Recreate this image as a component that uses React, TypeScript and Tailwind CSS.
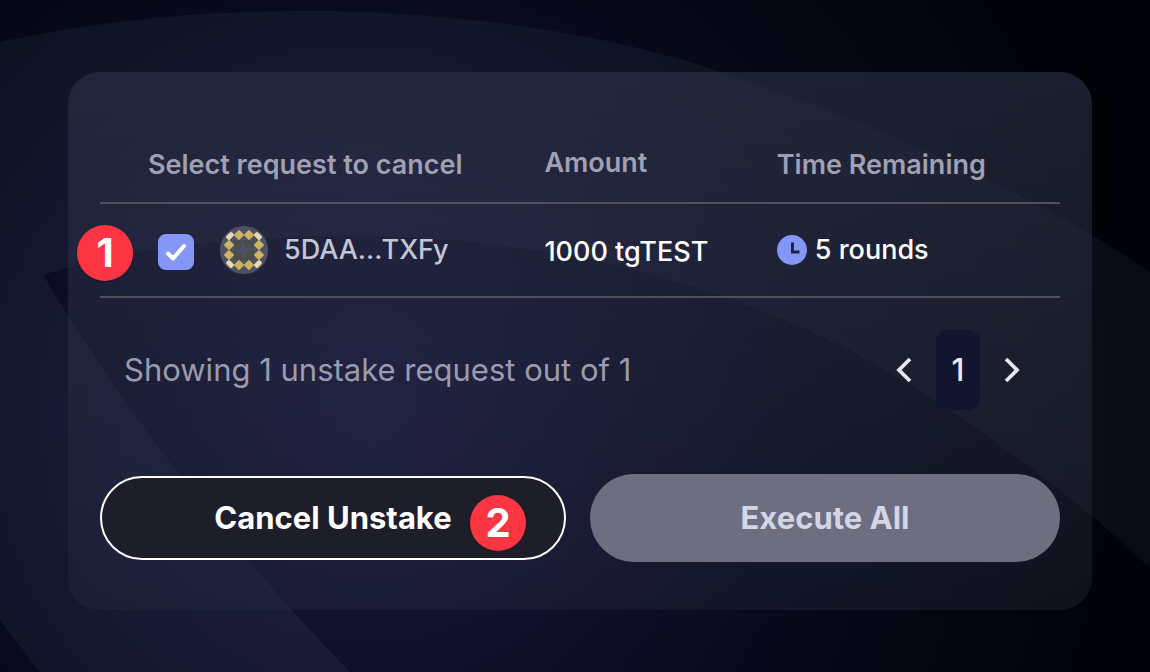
import { useState } from "react";

function Backdrop() {
  return (
    <svg
      aria-hidden="true"
      className="absolute inset-0 h-full w-full"
      viewBox="0 0 1150 672"
      preserveAspectRatio="xMidYMid slice"
    >
      <defs>
        <radialGradient id="glow" gradientUnits="userSpaceOnUse" cx="370" cy="420" r="780">
          <stop offset="0" stopColor="#1b1940" />
          <stop offset="0.35" stopColor="#0f0f29" />
          <stop offset="0.6" stopColor="#060919" />
          <stop offset="0.85" stopColor="#04050f" />
          <stop offset="1" stopColor="#010208" />
        </radialGradient>
        <linearGradient id="arc" gradientUnits="userSpaceOnUse" x1="0" y1="0" x2="1150" y2="400">
          <stop offset="0" stopColor="#8fa8d0" stopOpacity="0.07" />
          <stop offset="1" stopColor="#8fa0c0" stopOpacity="0.06" />
        </linearGradient>
      </defs>
      <rect width="1150" height="672" fill="url(#glow)" />
      <path
        d="M0 42C120 16 230 10 330 11C470 14 610 34 720 72C900 130 1060 210 1150 272V568C1080 500 960 410 850 350C700 275 540 240 380 236C240 234 120 250 43 275C130 420 240 560 350 672H40L0 620Z"
        fill="url(#arc)"
      />
    </svg>
  );
}

function StepBadge({ step, className }: { step: number; className: string }) {
  return (
    <span
      className={`absolute flex size-14 items-center justify-center rounded-full bg-[#fb3542] text-[40px] leading-none font-bold text-white shadow-sm ${className}`}
    >
      {step}
    </span>
  );
}

const petals = [
  [19, 9], [29, 9], [19, 39], [29, 39],
  [9, 19], [9, 29], [39, 19], [39, 29],
];
const corners = [
  [10, 10, 45], [38, 10, -45], [10, 38, -45], [38, 38, 45],
];

function AccountIcon() {
  return (
    <svg aria-hidden="true" className="size-12 shrink-0" viewBox="0 0 48 48">
      <circle cx="24" cy="24" r="24" fill="#505264" />
      <rect x="14" y="14" width="20" height="20" fill="#4c4b4b" />
      <path d="M22 15L26 21L33 22L27 26L25 33L21 27L15 25L21 22Z" fill="#4f5265" />
      {corners.map(([x, y, angle]) => (
        <rect
          key={`${x}-${y}`}
          x={x - 2.5}
          y={y - 4}
          width="5"
          height="8"
          rx="1.5"
          fill="#e6dcb2"
          transform={`rotate(${angle} ${x} ${y})`}
        />
      ))}
      {petals.map(([x, y]) => (
        <path
          key={`${x}-${y}`}
          d={`M${x} ${y - 4.3}L${x + 4.3} ${y}L${x} ${y + 4.3}L${x - 4.3} ${y}Z`}
          fill="#cbb562"
          stroke="#cbb562"
          strokeWidth="1.4"
          strokeLinejoin="round"
        />
      ))}
    </svg>
  );
}

function ClockIcon() {
  return (
    <svg aria-hidden="true" className="size-[30px] shrink-0" viewBox="0 0 30 30">
      <circle cx="15" cy="15" r="15" fill="#8496f6" />
      <path d="M15.500 7.500V17H22.500" fill="none" stroke="#1f2436" strokeWidth="3" />
    </svg>
  );
}

function Chevron({ d }: { d: string }) {
  return (
    <svg aria-hidden="true" className="h-7 w-5" viewBox="0 0 20 28">
      <path d={d} fill="none" stroke="#e6e7ee" strokeWidth="3.8" />
    </svg>
  );
}

export default function App() {
  const [checked, setChecked] = useState(true);

  return (
    <main className="relative min-h-screen overflow-hidden bg-[#02030c] pt-[72px] pr-[58px] pb-14 pl-[68px] font-['Inter',sans-serif] text-white">
      <Backdrop />
      <section className="relative rounded-[32px] bg-linear-to-b from-[#2d3248]/60 to-[#2b3044]/30 px-8 pt-14 pb-12">
        <table className="w-full table-fixed border-collapse text-left">
          <thead>
            <tr className="h-[75px] border-b-2 border-[#50515f] text-[27px] leading-9 text-[#9fa0b3]">
              <th scope="col" className="w-[44%] pl-12 font-semibold">Select request to cancel</th>
              <th scope="col" className="w-[24%] pb-1 pl-[22px] font-semibold">Amount</th>
              <th scope="col" className="w-[32%] pl-6 font-semibold">Time Remaining</th>
            </tr>
          </thead>
          <tbody>
            <tr className="h-[94px] border-b-2 border-[#50515f] text-[27px] leading-9 font-medium">
              <td className="relative pl-[58px]">
                <StepBadge step={1} className="top-[21px] -left-[23px]" />
                <label className="flex items-center">
                  <span className="relative mt-1 size-9 shrink-0">
                    <input
                      type="checkbox"
                      checked={checked}
                      onChange={(event) => setChecked(event.target.checked)}
                      className="peer block size-9 appearance-none rounded-lg border-2 border-[#8496f6] checked:bg-[#8496f6]"
                    />
                    <svg
                      aria-hidden="true"
                      className="pointer-events-none absolute inset-0 hidden size-9 peer-checked:block"
                      viewBox="0 0 36 36"
                    >
                      <path
                        d="M10 19.500L15 24.500L26 12"
                        fill="none"
                        stroke="white"
                        strokeWidth="4"
                        strokeLinecap="round"
                        strokeLinejoin="round"
                      />
                    </svg>
                  </span>
                  <span className="ml-[26px] flex items-center gap-4 text-[#c3c5d6]">
                    <AccountIcon />
                    5DAA...TXFy
                  </span>
                </label>
              </td>
              <td className="pt-1 pl-[22px]">1000 tgTEST</td>
              <td className="pl-6">
                <span className="flex items-center gap-2">
                  <ClockIcon />
                  5 rounds
                </span>
              </td>
            </tr>
          </tbody>
        </table>

        <div className="mt-8 flex items-center justify-between pr-[38px] pl-6">
          <p className="text-[31px] leading-10 text-[#9a9bae]">Showing 1 unstake request out of 1</p>
          <nav aria-label="Pagination" className="flex items-center gap-[22px]">
            <button type="button" aria-label="Previous page">
              <Chevron d="M16 3L5 14L16 25" />
            </button>
            <button
              type="button"
              aria-current="page"
              className="h-20 w-11 rounded-xl bg-[#12152f] text-[31px] font-medium text-[#e9eafa]"
            >
              1
            </button>
            <button type="button" aria-label="Next page">
              <Chevron d="M4 3L15 14L4 25" />
            </button>
          </nav>
        </div>

        <div className="mt-16 grid grid-cols-[466fr_470fr] items-center gap-6 text-[31px] leading-10 font-bold">
          <button type="button" className="relative h-[84px] rounded-full border-2 border-white bg-[#1e1d2a]">
            Cancel Unstake
            <StepBadge step={2} className="top-[17px] right-[38px]" />
          </button>
          <button type="button" className="h-[88px] rounded-full bg-[#6e6e80] text-[#d3d7e5]">
            Execute All
          </button>
        </div>
      </section>
    </main>
  );
}
